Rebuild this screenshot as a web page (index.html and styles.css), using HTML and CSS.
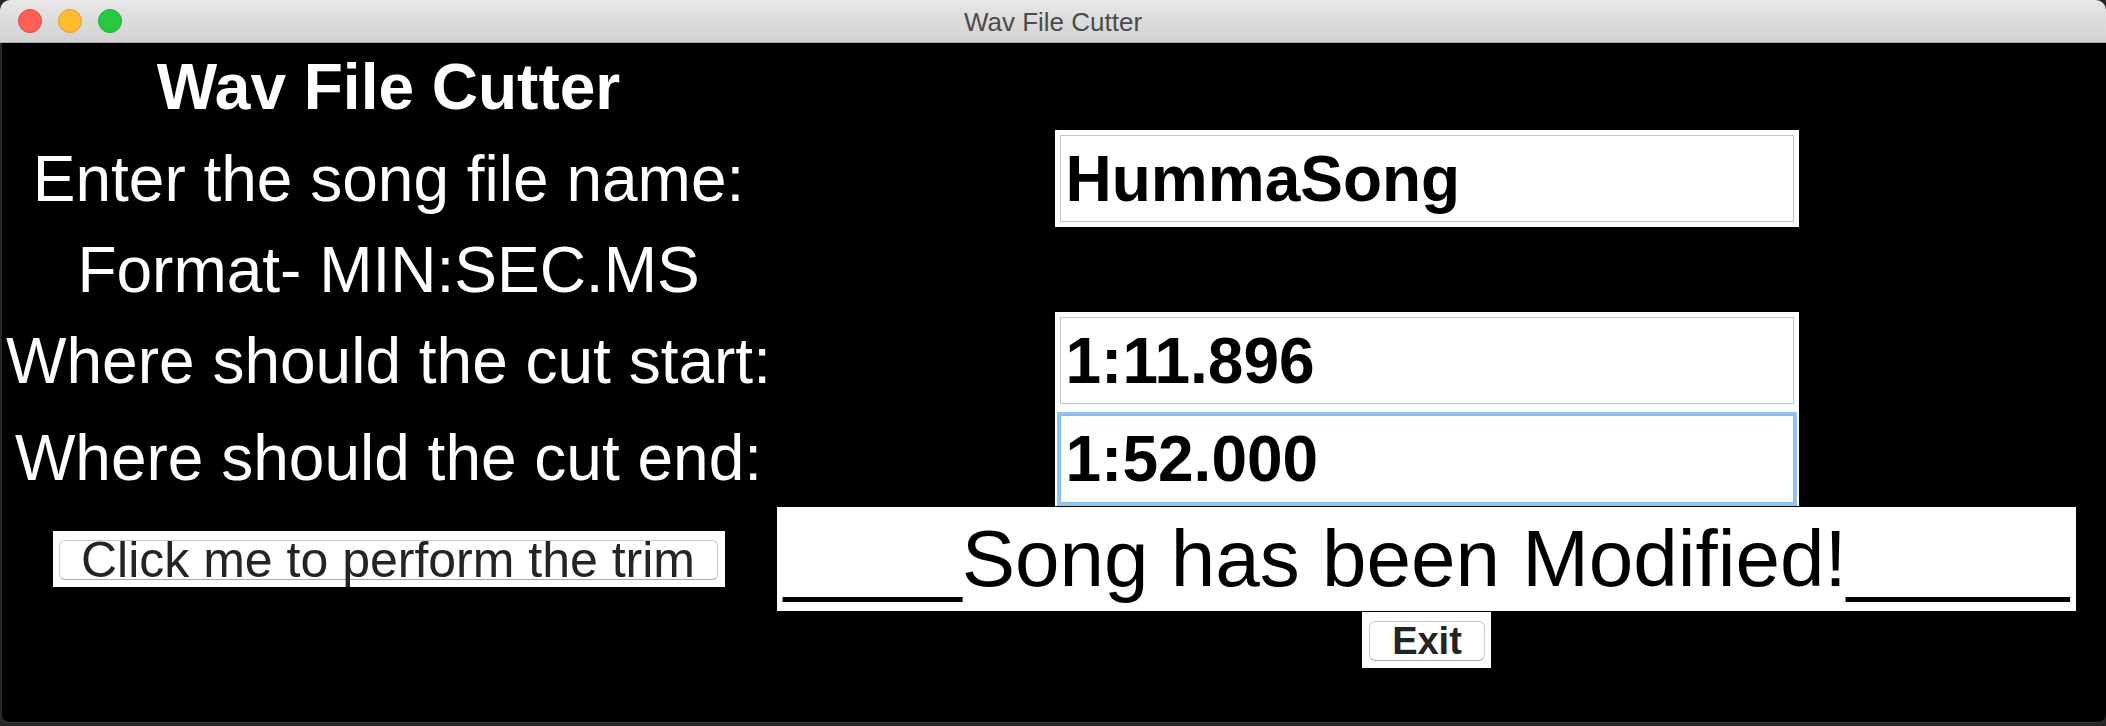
FILE: index.html
```html
<!DOCTYPE html>
<html lang="en">
<head>
<meta charset="utf-8">
<title>Wav File Cutter</title>
<link rel="stylesheet" href="styles.css">
</head>
<body>
<div class="window">
  <div class="titlebar">
    <div class="lights">
      <span class="light red"></span>
      <span class="light yellow"></span>
      <span class="light green"></span>
    </div>
    <div class="wtitle">Wav File Cutter</div>
    <div class="spacer"></div>
  </div>
  <div class="content">
    <div class="heading">Wav File Cutter</div>
    <div></div>

    <div class="label">Enter the song file name:</div>
    <div class="entry"><div class="entry-inner">HummaSong</div></div>

    <div class="label">Format- MIN:SEC.MS</div>
    <div></div>

    <div class="label">Where should the cut start:</div>
    <div class="entry"><div class="entry-inner">1:11.896</div></div>

    <div class="label">Where should the cut end:</div>
    <div class="entry focused"><div class="entry-inner">1:52.000</div></div>

    <div class="btn-wrap trim-wrap"><div class="btn trim">Click me to perform the trim</div></div>
    <div class="message">____Song has been Modified!_____</div>

    <div></div>
    <div class="btn-wrap exit-wrap"><div class="btn exit">Exit</div></div>
  </div>
</div>
</body>
</html>
```

FILE: styles.css
```css
html, body {
  margin: 0;
  padding: 0;
}
body {
  width: 2106px;
  height: 726px;
  background: #262626;
  overflow: hidden;
  font-family: "Liberation Sans", Arial, Helvetica, sans-serif;
}
.window {
  width: 2106px;
  height: 722px;
  background: #000;
  border-radius: 10px 10px 8px 8px;
  border-bottom: 1px solid #3a3a3a;
  box-shadow: inset 2px 0 0 #2a2a2a;
  overflow: hidden;
  display: flex;
  flex-direction: column;
}
.titlebar {
  height: 42px;
  flex: 0 0 42px;
  background: linear-gradient(#e7e7e7, #d2d2d2);
  border-bottom: 1px solid #ababab;
  display: grid;
  grid-template-columns: 1fr auto 1fr;
  align-items: center;
}
.lights {
  display: flex;
  gap: 16px;
  padding-left: 18px;
  align-items: center;
}
.light {
  width: 22px;
  height: 22px;
  border-radius: 50%;
  display: block;
}
.red { background: #fe5f57; border: 1px solid #e2463f; }
.yellow { background: #febc2e; border: 1px solid #dfa023; }
.green { background: #28c840; border: 1px solid #1dac2b; }
.wtitle {
  font-size: 26px;
  color: #4b4b4b;
  padding-top: 2px;
}
.content {
  display: grid;
  grid-template-columns: 777px 1299px;
  grid-template-rows: 87px 97px 85px 97px 97px 106px 56px;
}
.content > * {
  justify-self: center;
  align-self: center;
}
.heading {
  color: #fff;
  font-weight: bold;
  font-size: 64px;
  white-space: nowrap;
}
.label {
  color: #fff;
  font-size: 64px;
  white-space: nowrap;
}
.entry {
  width: 744px;
  height: 97px;
  box-sizing: border-box;
  padding: 5px;
  background: #fff;
}
.entry-inner {
  height: 100%;
  box-sizing: border-box;
  border: 1px solid #c4c4c4;
  display: flex;
  align-items: center;
  padding-left: 5px;
  font-weight: bold;
  font-size: 64px;
  color: #000;
  white-space: nowrap;
}
.entry.focused {
  padding: 3px 2px 0 2px;
}
.entry.focused .entry-inner {
  border: 3px solid #92c3f3;
  box-shadow: inset 0 0 0 1px #86b9ec;
  padding-left: 6px;
}
.btn-wrap {
  background: #fff;
  height: 56px;
  box-sizing: border-box;
  padding: 9px 7px 7px 6px;
}
.trim-wrap { width: 672px; }
.exit-wrap { width: 129px; padding: 9px 6px 6px 7px; }
.btn {
  height: 40px;
  box-sizing: border-box;
  border: 1px solid #c9c9c9;
  border-bottom-color: #a8a8a8;
  border-radius: 6px;
  background: #fff;
  display: flex;
  align-items: center;
  justify-content: center;
  white-space: nowrap;
  color: #242424;
}
.trim {
  font-size: 50px;
}
.exit {
  font-size: 38px;
  font-weight: bold;
}
.message {
  width: 1299px;
  height: 104px;
  background: #fff;
  color: #000;
  font-size: 80px;
  display: flex;
  align-items: center;
  justify-content: center;
  white-space: nowrap;
}
```
